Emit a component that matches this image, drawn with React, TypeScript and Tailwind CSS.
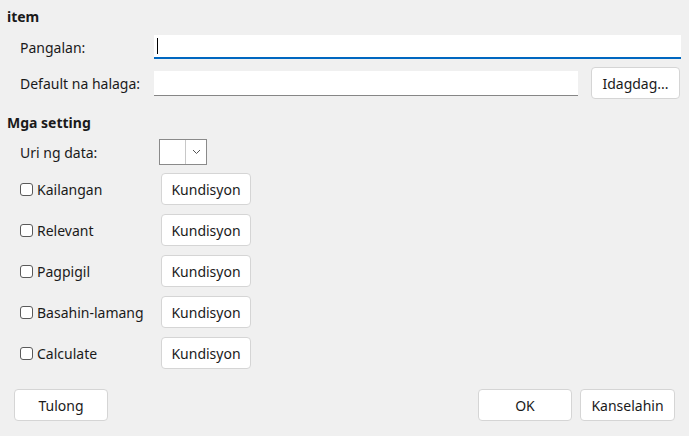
const font = { fontFamily: '"Noto Sans", "Open Sans", sans-serif' };

const Btn = ({ children, className = '' }: { children: React.ReactNode; className?: string }) => (
  <button
    className={`shrink-0 h-[32px] bg-white border border-[#d5d5d5] rounded-[4px] text-[14px] text-[#1a1a1a] flex items-center justify-center ${className}`}
  >
    {children}
  </button>
);

const CheckRow = ({ label }: { label: string }) => (
  <div className="flex items-center h-[32px]">
    <div className="w-[154px] shrink-0 flex items-center pl-[13px]">
      <span className="w-[13px] h-[13px] border border-[#5a5a5a] rounded-[3px] bg-white mr-[4px]" />
      <span className="text-[14px] text-[#1a1a1a]">{label}</span>
    </div>
    <Btn className="w-[90px]">Kundisyon</Btn>
  </div>
);

export default function App() {
  return (
    <div className="w-[689px] h-[436px] bg-[#f0f0f0] flex flex-col px-[7px] pt-[6px] text-[#1a1a1a]" style={font}>
      <div className="text-[14px] font-bold h-[22px] leading-[22px]">item</div>

      <div className="flex items-center mt-[7px] h-[24px]">
        <span className="w-[147px] shrink-0 pl-[13px] text-[14px]">Pangalan:</span>
        <div className="flex-1 mr-[1px] h-[24px] bg-white border-b-2 border-[#0067c0] flex items-center pl-[3px]">
          <span className="w-px h-[16px] bg-black" />
        </div>
      </div>

      <div className="flex items-center mt-[8px] h-[32px]">
        <span className="w-[147px] shrink-0 pl-[13px] text-[14px]">Default na halaga:</span>
        <div className="w-[424px] h-[25px] bg-white border-b border-[#868686]" />
        <Btn className="w-[89px] ml-[13px]">Idagdag...</Btn>
      </div>

      <div className="text-[14px] font-bold h-[22px] leading-[22px] mt-[13px]">Mga setting</div>

      <div className="flex items-center mt-[5px] h-[26px]">
        <span className="w-[152px] shrink-0 pl-[13px] text-[14px]">Uri ng data:</span>
        <div className="w-[48px] h-[26px] border border-[#8a8a8a] bg-white flex">
          <div className="w-[25px]" />
          <div className="flex-1 border-l border-[#c8c8c8] flex items-center justify-center">
            <svg width="9" height="6" viewBox="0 0 9 6">
              <path d="M1 1l3.5 3.5L8 1" fill="none" stroke="#555" strokeWidth="1" />
            </svg>
          </div>
        </div>
      </div>

      <div className="flex flex-col gap-[9px] mt-[8px]">
        <CheckRow label="Kailangan" />
        <CheckRow label="Relevant" />
        <CheckRow label="Pagpigil" />
        <CheckRow label="Basahin-lamang" />
        <CheckRow label="Calculate" />
      </div>

      <div className="flex items-center mt-[20px] pl-[7px] pr-[7px]">
        <Btn className="w-[94px]">Tulong</Btn>
        <div className="flex-1" />
        <Btn className="w-[94px] border-[#0067c0]">OK</Btn>
        <Btn className="w-[95px] ml-[8px]">Kanselahin</Btn>
      </div>
    </div>
  );
}
